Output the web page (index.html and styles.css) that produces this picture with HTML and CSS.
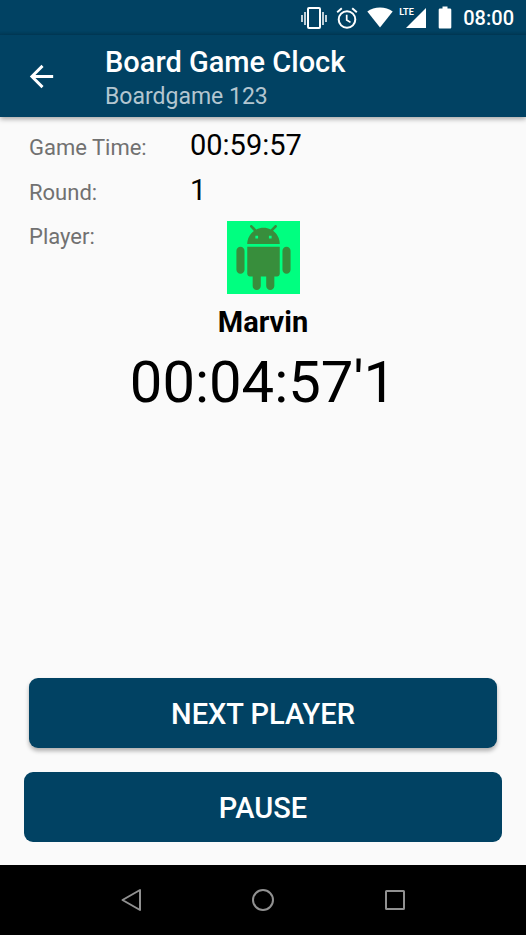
FILE: index.html
```html
<!DOCTYPE html>
<html lang="en">
<head>
<meta charset="utf-8">
<meta name="viewport" content="width=device-width, initial-scale=1">
<title>Board Game Clock</title>
<link rel="stylesheet" href="styles.css">
</head>
<body>
<div class="status-bar">
  <svg class="status-vibrate" viewBox="0 0 26 22" width="26" height="22" aria-hidden="true">
    <path d="M1 8v7M4 5v13M22 5v13M25 8v7" fill="none" stroke="currentColor" stroke-width="1.500"/>
    <rect x="7" y="1" width="12" height="20" rx="1" fill="none" stroke="currentColor" stroke-width="2"/>
  </svg>
  <svg class="status-alarm" viewBox="0 0 22 22" width="22" height="22" aria-hidden="true">
    <circle cx="11" cy="12.5" r="8.300" fill="none" stroke="currentColor" stroke-width="2"/>
    <path d="M1.2 5.2l4.6-3.9M20.8 5.2l-4.6-3.9" fill="none" stroke="currentColor" stroke-width="2"/>
    <path d="M10.7 7.8v5.2l3.8 2.4" fill="none" stroke="currentColor" stroke-width="1.7"/>
  </svg>
  <svg class="status-wifi" viewBox="0 0 26 21" width="26" height="21" aria-hidden="true">
    <path d="M13 20.5L.3 4.6C3.8 1.8 8.2 .5 13 .5s9.2 1.3 12.7 4.1z" fill="currentColor"/>
  </svg>
  <div class="cell">
    <span class="cell-type">LTE</span>
    <svg viewBox="0 0 20 20" width="20" height="20" aria-hidden="true"><path d="M0 20L20 0v20z" fill="currentColor"/></svg>
  </div>
  <svg class="status-battery" viewBox="0 0 14 23" width="14" height="23" aria-hidden="true">
    <path d="M4.5 .5h5v2h2.500c.8 0 1.300.6 1.300 1.300v17.400c0 .8-.5 1.300-1.300 1.300H2c-.8 0-1.300-.5-1.300-1.300V3.800c0-.7.500-1.300 1.300-1.300h2.500z" fill="currentColor"/>
  </svg>
  <time class="status-time">08:00</time>
</div>

<header class="app-bar">
  <button class="back" type="button" aria-label="Back">
    <svg viewBox="0 0 24 24" width="35" height="35" aria-hidden="true"><path d="M20 11H7.830l5.590-5.590L12 4l-8 8 8 8 1.410-1.410L7.830 13H20v-2z" fill="currentColor"/></svg>
  </button>
  <div>
    <h1 class="title">Board Game Clock</h1>
    <p class="subtitle">Boardgame 123</p>
  </div>
</header>

<main class="game">
  <div class="row">
    <span class="label">Game Time:</span>
    <span class="value">00:59:57</span>
  </div>
  <div class="row">
    <span class="label">Round:</span>
    <span class="value">1</span>
  </div>
  <div class="player-row">
    <span class="label">Player:</span>
    <div class="player">
      <svg class="avatar" viewBox="0 0 24 24" aria-hidden="true"><path d="M6 18c0 .55.45 1 1 1h1v3.500c0 .83.67 1.500 1.500 1.500s1.500-.67 1.500-1.500V19h2v3.500c0 .83.67 1.500 1.500 1.500s1.500-.67 1.500-1.500V19h1c.55 0 1-.45 1-1V8H6v10zM3.500 8C2.670 8 2 8.670 2 9.500v7c0 .83.67 1.500 1.500 1.500S5 17.330 5 16.500v-7C5 8.670 4.330 8 3.500 8zm17 0c-.83 0-1.500.67-1.500 1.500v7c0 .83.67 1.500 1.500 1.500s1.500-.67 1.500-1.500v-7c0-.83-.67-1.500-1.500-1.500zm-4.970-5.840l1.300-1.300c.2-.2.2-.51 0-.71-.2-.2-.51-.2-.71 0l-1.480 1.480C13.850 1.230 12.950 1 12 1c-.96 0-1.860.23-2.660.63L7.850.15c-.2-.2-.51-.2-.71 0-.2.2-.2.51 0 .71l1.310 1.310C6.970 3.260 6 5.010 6 7h12c0-1.990-.97-3.750-2.470-4.840zM10 5H9V4h1v1zm5 0h-1V4h1v1z" fill="currentColor"/></svg>
      <h2 class="name">Marvin</h2>
    </div>
  </div>
  <p class="timer">00:04:57'1</p>
  <div class="actions">
    <button class="action next" type="button">NEXT PLAYER</button>
    <button class="action pause" type="button">PAUSE</button>
  </div>
</main>

<nav class="nav-bar" aria-label="System">
  <button type="button" aria-label="Back">
    <svg viewBox="0 0 24 24" width="24" height="24" aria-hidden="true"><path d="M20 2v20L2.500 12z" fill="none" stroke="currentColor" stroke-width="2" stroke-linejoin="round"/></svg>
  </button>
  <button type="button" aria-label="Home">
    <svg viewBox="0 0 24 24" width="24" height="24" aria-hidden="true"><circle cx="12" cy="12" r="10" fill="none" stroke="currentColor" stroke-width="2"/></svg>
  </button>
  <button type="button" aria-label="Recent apps">
    <svg viewBox="0 0 24 24" width="24" height="24" aria-hidden="true"><rect x="3" y="3" width="18" height="18" rx=".5" fill="none" stroke="currentColor" stroke-width="2"/></svg>
  </button>
</nav>
</body>
</html>
```
FILE: styles.css
```css
* {
  box-sizing: border-box;
}

body {
  margin: 0;
  min-height: 100vh;
  display: flex;
  flex-direction: column;
  background: #fafafa;
  color: #000;
  font-family: Roboto, "Liberation Sans", sans-serif;
}

h1, h2, p {
  margin: 0;
}

button {
  margin: 0;
  padding: 0;
  border: 0;
  background: none;
  color: inherit;
  font: inherit;
}

svg {
  display: block;
  flex: none;
}

.status-bar {
  height: 35px;
  padding-right: 12px;
  display: flex;
  align-items: center;
  justify-content: flex-end;
  background: linear-gradient(#014263 31px, #013a58);
  color: #fff;
}

.status-alarm {
  margin-left: 9px;
}

.status-wifi {
  margin-left: 9px;
}

.cell {
  position: relative;
  margin-left: 13px;
}

.cell-type {
  position: absolute;
  top: -1px;
  left: -7px;
  font-size: 9px;
  font-weight: 700;
  line-height: 10px;
}

.status-battery {
  margin-left: 12px;
}

.status-time {
  margin-left: 11px;
  font-size: 20px;
  font-weight: 500;
  line-height: 24px;
}

.app-bar {
  position: relative;
  display: flex;
  align-items: flex-start;
  gap: 46px;
  padding: 9px 24px 3px;
  background: #014263;
  color: #fff;
  box-shadow: 0 2px 5px rgba(0, 0, 0, 0.35);
}

.back {
  margin-top: 15px;
}

.title {
  font-size: 29px;
  font-weight: 500;
  line-height: 36px;
}

.subtitle {
  color: #b3c6d0;
  font-size: 23px;
  line-height: 34px;
}

.game {
  flex: 1;
  display: flex;
  flex-direction: column;
  padding: 7px 24px 23px;
}

.row {
  display: grid;
  grid-template-columns: 161px 1fr;
  align-items: baseline;
  padding: 0 5px;
  line-height: 42px;
}

.label {
  color: #717171;
  font-size: 22px;
}

.value {
  font-size: 29px;
}

.player-row {
  display: grid;
  grid-template-columns: 1fr auto 1fr;
  padding: 7px 5px 0;
  line-height: 32px;
}

.player {
  display: flex;
  flex-direction: column;
  align-items: center;
}

.avatar {
  width: 73px;
  height: 73px;
  padding: 4px;
  background: #00ff80;
  color: #388e3c;
}

.name {
  margin-top: 11px;
  font-size: 29px;
  font-weight: 700;
  line-height: 34px;
}

.timer {
  margin-top: 9px;
  font-size: 58px;
  line-height: 68px;
  text-align: center;
}

.actions {
  margin-top: auto;
  display: flex;
  flex-direction: column;
  gap: 24px;
}

.action {
  height: 70px;
  padding-top: 2px;
  border-radius: 9px;
  background: #014263;
  color: #fff;
  font-size: 29px;
  font-weight: 500;
}

.next {
  margin: 0 5px;
  box-shadow: 0 3px 4px rgba(0, 0, 0, 0.3);
}

.nav-bar {
  height: 70px;
  padding: 0 12.5%;
  display: grid;
  grid-template-columns: repeat(3, 1fr);
  background: #000;
  color: #919191;
}

.nav-bar button {
  display: grid;
  place-items: center;
}
```
